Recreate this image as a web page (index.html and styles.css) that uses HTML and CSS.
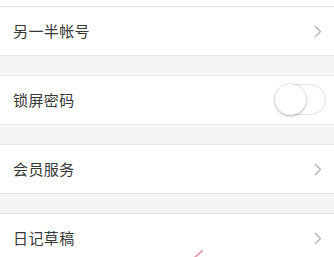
FILE: index.html
```html
<!DOCTYPE html>
<html lang="zh-CN">
<head>
<meta charset="utf-8">
<link rel="stylesheet" href="styles.css">
</head>
<body>
<div class="list">
  <div class="row row-partial"></div>
  <div class="row">
    <span class="label">另一半帐号</span>
    <svg class="chev" width="8" height="13" viewBox="0 0 8 13"><path d="M1 1 L6.5 6.5 L1 12" fill="none" stroke="#b5b5b5" stroke-width="1.4"/></svg>
  </div>
  <div class="gap"></div>
  <div class="row">
    <span class="label">锁屏密码</span>
    <span class="toggle"><span class="knob"></span></span>
  </div>
  <div class="gap"></div>
  <div class="row">
    <span class="label">会员服务</span>
    <svg class="chev" width="8" height="13" viewBox="0 0 8 13"><path d="M1 1 L6.5 6.5 L1 12" fill="none" stroke="#b5b5b5" stroke-width="1.4"/></svg>
  </div>
  <div class="gap"></div>
  <div class="row">
    <span class="label">日记草稿</span>
    <svg class="chev" width="8" height="13" viewBox="0 0 8 13"><path d="M1 1 L6.5 6.5 L1 12" fill="none" stroke="#b5b5b5" stroke-width="1.4"/></svg>
  </div>
</div>
<svg class="mark" width="14" height="10" viewBox="0 0 14 10"><path d="M2 10 L11 2" stroke="#e6a0b0" stroke-width="2" fill="none" stroke-linecap="round"/></svg>
</body>
</html>
```

FILE: styles.css
```css
html, body {
  margin: 0;
  padding: 0;
  background: #ffffff;
}
body {
  width: 334px;
  height: 257px;
  overflow: hidden;
  position: relative;
  font-family: "Noto Sans CJK SC", "Noto Sans", sans-serif;
}
.list {
  display: flex;
  flex-direction: column;
}
.row {
  height: 48px;
  border-bottom: 1px solid #e4e4e4;
  background: #fff;
  display: flex;
  align-items: center;
  justify-content: space-between;
  padding: 0 11px 0 13px;
  flex-shrink: 0;
}
.row-partial {
  height: 6px;
}
.gap {
  height: 19px;
  background: #f5f5f5;
  border-bottom: 1px solid #e4e4e4;
  flex-shrink: 0;
}
.label {
  font-size: 15px;
  letter-spacing: 0.4px;
  color: #383838;
  line-height: 20px;
}
.chev {
  display: block;
  margin-right: 1px;
}
.toggle {
  width: 51px;
  height: 31px;
  border-radius: 16px;
  border: 1px solid #e2e2e2;
  box-sizing: border-box;
  background: #fff;
  position: relative;
  margin-right: -3px;
  margin-top: -2px;
}
.knob {
  position: absolute;
  left: -1px;
  top: -1px;
  width: 31px;
  height: 31px;
  border-radius: 50%;
  background: #fff;
  box-shadow: 0 1px 3px rgba(0,0,0,0.28), 0 0 0 1px rgba(0,0,0,0.05);
}
.mark {
  position: absolute;
  left: 191px;
  top: 249px;
}
```
